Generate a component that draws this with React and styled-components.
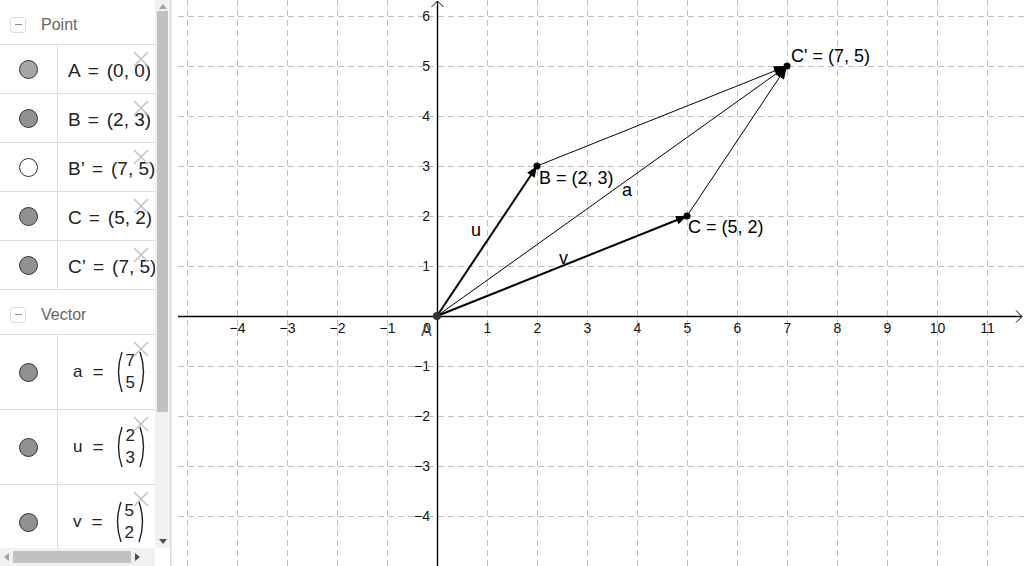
import React from "react";
import styled, { createGlobalStyle } from "styled-components";

const GlobalStyle = createGlobalStyle`
  html, body {
    margin: 0;
    padding: 0;
    background: #fff;
    font-family: "Liberation Sans", Arial, sans-serif;
    overflow: hidden;
  }
`;

const Page = styled.div`
  display: flex;
  width: 1024px;
  height: 566px;
  overflow: hidden;
`;

const Sidebar = styled.div`
  display: flex;
  flex-direction: column;
  width: 170px;
  flex-shrink: 0;
`;

const Viewport = styled.div`
  display: flex;
  flex: 1;
  min-height: 0;
`;

const Content = styled.div`
  width: 155px;
  overflow: hidden;
`;

const VScroll = styled.div`
  width: 15px;
  background: #f1f1f1;
  display: flex;
  flex-direction: column;
  align-items: center;
  justify-content: space-between;
  padding: 4px 0 4px;
  box-sizing: border-box;
`;

const VThumb = styled.div`
  width: 11px;
  height: 401px;
  background: #c1c1c1;
  margin-top: 2px;
  margin-bottom: auto;
`;

const HScroll = styled.div`
  height: 18px;
  display: flex;
`;

const HTrack = styled.div`
  width: 155px;
  background: #f1f1f1;
  display: flex;
  align-items: center;
  padding: 0 4px;
  box-sizing: border-box;
  gap: 4px;
`;

const HThumb = styled.div`
  width: 118px;
  height: 12px;
  background: #c1c1c1;
`;

const Corner = styled.div`
  flex: 1;
  background: #fff;
`;

const Arrow = styled.div`
  width: 0;
  height: 0;
  border-style: solid;
  border-color: transparent;
  ${({ dir }) =>
    dir === "up"
      ? "border-width: 0 4px 5px 4px; border-bottom-color: #a3a3a3;"
      : dir === "down"
      ? "border-width: 5px 4px 0 4px; border-top-color: #505050;"
      : dir === "left"
      ? "border-width: 4px 5px 4px 0; border-right-color: #a3a3a3;"
      : "border-width: 4px 0 4px 5px; border-left-color: #505050;"}
`;

const Divider = styled.div`
  width: 2px;
  flex-shrink: 0;
  border-left: 1px solid #dcdcdc;
  border-right: 1px solid #ececec;
  box-sizing: border-box;
`;

const Graph = styled.div`
  flex: 1;
  position: relative;
`;

const SectionHeader = styled.div`
  height: 45px;
  box-sizing: border-box;
  border-bottom: 1px solid #dcdcdc;
  display: flex;
  align-items: center;
  padding-left: 10px;
  padding-top: 5px;
  color: #666;
  font-size: 16px;
`;

const Toggle = styled.span`
  width: 14px;
  height: 14px;
  border: 1px solid #dcdcdc;
  border-radius: 3px;
  display: inline-flex;
  align-items: center;
  justify-content: center;
  margin-right: 15px;
  &::after {
    content: "";
    width: 7px;
    height: 1px;
    background: #888;
  }
`;

const Row = styled.div`
  position: relative;
  display: flex;
  height: ${({ tall }) => (tall ? 75 : 49)}px;
  box-sizing: border-box;
  border-bottom: 1px solid #dcdcdc;
`;

const MarbleCell = styled.div`
  width: 57px;
  flex-shrink: 0;
  border-right: 1px solid #dcdcdc;
  display: flex;
  align-items: center;
  justify-content: center;
`;

const Marble = styled.span`
  width: 19px;
  height: 19px;
  border-radius: 50%;
  border: 1px solid #333;
  box-sizing: border-box;
  background: ${({ fill }) => fill};
`;

const TextCell = styled.div`
  display: flex;
  align-items: center;
  padding-left: 10px;
  font-size: 19px;
  color: #222;
  white-space: pre;
  padding-top: 3px;
`;

const PointEq = styled.span`
  margin: 0 8px 0 7px;
`;

const VecCell = styled.div`
  display: flex;
  align-items: center;
  padding-left: 15px;
  font-size: 17px;
  color: #222;
  white-space: nowrap;
`;

const Eq = styled.span`
  margin: 0 12px 0 10px;
  font-size: 19px;
`;

const Matrix = styled.span`
  display: inline-flex;
  align-items: center;
`;

const MatrixCol = styled.span`
  display: flex;
  flex-direction: column;
  align-items: center;
  line-height: 22px;
  font-size: 17px;
  padding: 0 4px 0 3px;
`;

const Delete = styled.svg`
  position: absolute;
  right: 6px;
  top: 6px;
`;

const points = [
  { name: "A", value: "(0, 0)", fill: "#a6a6a6" },
  { name: "B", value: "(2, 3)", fill: "#919191" },
  { name: "B’", value: "(7, 5)", fill: "#fff" },
  { name: "C", value: "(5, 2)", fill: "#919191" },
  { name: "C’", value: "(7, 5)", fill: "#919191" },
];

const vectors = [
  { name: "a", x: 7, y: 5 },
  { name: "u", x: 2, y: 3 },
  { name: "v", x: 5, y: 2 },
];

const DeleteIcon = () => (
  <Delete width="16" height="16" viewBox="0 0 16 16">
    <path d="M1 1 L15 15 M15 1 L1 15" stroke="#c4c4c4" strokeWidth="1.6" />
  </Delete>
);

const Paren = ({ right }) => (
  <svg width="7" height="42" viewBox="0 0 7 42">
    <path
      d={right ? "M1 1 Q8 21 1 41" : "M6 1 Q-1 21 6 41"}
      stroke="#222"
      strokeWidth="1.4"
      fill="none"
    />
  </svg>
);

// graph coordinates: origin at (265, 316), 50px per unit
const ox = 265;
const oy = 316;
const U = 50;
const px = (x) => ox + x * U;
const py = (y) => oy - y * U;

const arrowHead = (x1, y1, x2, y2, len, half) => {
  const dx = x2 - x1;
  const dy = y2 - y1;
  const d = Math.hypot(dx, dy);
  const ux = dx / d;
  const uy = dy / d;
  const bx = x2 - ux * len;
  const by = y2 - uy * len;
  return `${x2},${y2} ${bx - uy * half},${by + ux * half} ${bx + uy * half},${by - ux * half}`;
};

const Plot = () => {
  const xs = [];
  for (let i = -5; i <= 11; i++) xs.push(i);
  const ys = [];
  for (let j = -5; j <= 6; j++) ys.push(j);
  const A = [px(0), py(0)];
  const B = [px(2), py(3)];
  const C = [px(5), py(2)];
  const Cp = [px(7), py(5)];
  return (
    <svg width="852" height="566" viewBox="0 0 852 566" style={{ display: "block" }}>
      <g stroke="#c0c0c0" strokeWidth="1" strokeDasharray="6 4">
        {xs.map((i) =>
          i === 0 ? null : (
            <line key={"x" + i} x1={px(i) + 0.5} y1="0" x2={px(i) + 0.5} y2="566" />
          )
        )}
        {ys.map((j) =>
          j === 0 ? null : (
            <line key={"y" + j} x1="6" y1={py(j) + 0.5} x2="852" y2={py(j) + 0.5} />
          )
        )}
      </g>
      <g stroke="#000" strokeWidth="1.4" fill="none">
        <line x1="6" y1={oy + 0.5} x2="850" y2={oy + 0.5} />
        <path d={`M844 ${oy - 5.5} L850 ${oy + 0.5} L844 ${oy + 6.5}`} strokeWidth="1" />
        <line x1={ox + 0.5} y1="1" x2={ox + 0.5} y2="566" />
        <path d={`M${ox - 5.5} 7 L${ox + 0.5} 1 L${ox + 6.5} 7`} strokeWidth="1" />
      </g>
      <g
        fontFamily='"Liberation Sans", Arial, sans-serif'
        fontSize="14"
        fill="#111"
      >
        {xs.map((i) =>
          i === 0 || i === -5 ? null : (
            <text key={"lx" + i} x={px(i) + 0.5} y="333" textAnchor="middle">
              {i < 0 ? "−" + -i : i}
            </text>
          )
        )}
        {ys.map((j) =>
          j === 0 || j === -5 ? null : (
            <text key={"ly" + j} x={ox - 7} y={py(j) + 5} textAnchor="end">
              {j < 0 ? "−" + -j : j}
            </text>
          )
        )}
        <text x={ox - 6} y="333" textAnchor="end">0</text>
      </g>

      <g stroke="#000" fill="none">
        <line x1={A[0]} y1={A[1]} x2={B[0]} y2={B[1]} strokeWidth="2" />
        <line x1={A[0]} y1={A[1]} x2={C[0]} y2={C[1]} strokeWidth="2" />
        <line x1={A[0]} y1={A[1]} x2={Cp[0]} y2={Cp[1]} strokeWidth="1" />
        <line x1={B[0]} y1={B[1]} x2={Cp[0]} y2={Cp[1]} strokeWidth="1" />
        <line x1={C[0]} y1={C[1]} x2={Cp[0]} y2={Cp[1]} strokeWidth="1" />
      </g>
      <g fill="#000">
        <polygon points={arrowHead(A[0], A[1], B[0], B[1], 11, 4.5)} />
        <polygon points={arrowHead(A[0], A[1], C[0], C[1], 11, 4.5)} />
        <polygon points={arrowHead(A[0], A[1], Cp[0], Cp[1], 13, 5)} />
        <polygon points={arrowHead(B[0], B[1], Cp[0], Cp[1], 13, 5)} />
        <polygon points={arrowHead(C[0], C[1], Cp[0], Cp[1], 13, 5)} />
        <circle cx={B[0]} cy={B[1]} r="3.5" />
        <circle cx={C[0]} cy={C[1]} r="3.5" />
        <circle cx={Cp[0]} cy={Cp[1]} r="3.5" />
        <circle cx={A[0]} cy={A[1]} r="4" fill="#333" />
      </g>
      <g
        fontFamily='"Liberation Sans", Arial, sans-serif'
        fontSize="18"
        fill="#000"
      >
        <text x={ox - 16} y="336" fill="#444" fontSize="16">A</text>
        <text x="367" y="184">B = (2, 3)</text>
        <text x="516" y="233">C = (5, 2)</text>
        <text x="619" y="62">C' = (7, 5)</text>
        <text x="450" y="196">a</text>
        <text x="299" y="236">u</text>
        <text x="387" y="264">v</text>
      </g>
    </svg>
  );
};

export default function App() {
  return (
    <>
      <GlobalStyle />
      <Page>
        <Sidebar>
          <Viewport>
            <Content>
              <SectionHeader>
                <Toggle />
                Point
              </SectionHeader>
              {points.map((p) => (
                <Row key={p.name}>
                  <MarbleCell>
                    <Marble fill={p.fill} />
                  </MarbleCell>
                  <TextCell>
                    {p.name}
                    <PointEq>=</PointEq>
                    {p.value}
                  </TextCell>
                  <DeleteIcon />
                </Row>
              ))}
              <SectionHeader>
                <Toggle />
                Vector
              </SectionHeader>
              {vectors.map((v) => (
                <Row key={v.name} tall>
                  <MarbleCell>
                    <Marble fill="#919191" />
                  </MarbleCell>
                  <VecCell>
                    {v.name}
                    <Eq>=</Eq>
                    <Matrix>
                      <Paren />
                      <MatrixCol>
                        <span>{v.x}</span>
                        <span>{v.y}</span>
                      </MatrixCol>
                      <Paren right />
                    </Matrix>
                  </VecCell>
                  <DeleteIcon />
                </Row>
              ))}
            </Content>
            <VScroll>
              <Arrow dir="up" />
              <VThumb />
              <Arrow dir="down" />
            </VScroll>
          </Viewport>
          <HScroll>
            <HTrack>
              <Arrow dir="left" />
              <HThumb />
              <Arrow dir="right" />
            </HTrack>
            <Corner />
          </HScroll>
        </Sidebar>
        <Divider />
        <Graph>
          <Plot />
        </Graph>
      </Page>
    </>
  );
}
